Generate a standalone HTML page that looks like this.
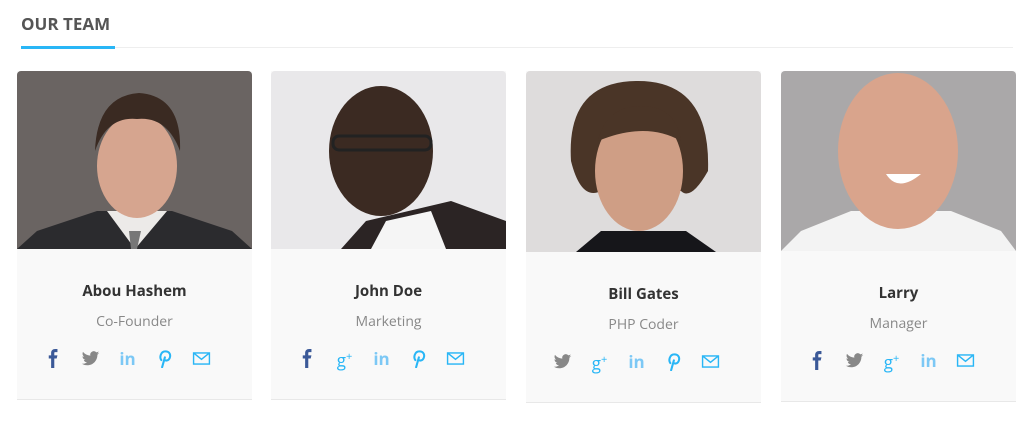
<!DOCTYPE html>
<html><head><meta charset="utf-8"><style>
*{margin:0;padding:0;box-sizing:border-box}
body{width:1029px;height:421px;background:#fff;font-family:"Open Sans","Liberation Sans",sans-serif;position:relative;overflow:hidden}
.title{position:absolute;left:21px;top:12px;font-size:17px;font-weight:bold;color:#555}
.line{position:absolute;left:21px;top:47px;width:992px;height:1px;background:#eee}
.uline{position:absolute;left:21px;top:46px;width:94px;height:3px;background:#29b6f6}
.card{position:absolute;top:71px;width:235px;background:#f9f9f9;border-bottom:1px solid #e8e8e8}
.card svg.ph{display:block;border-radius:4px 4px 0 0}
.name{text-align:center;font-size:15px;font-weight:bold;color:#333;margin-top:32px}
.role{text-align:center;font-size:14px;color:#888;margin-top:11px}
.icons{display:flex;justify-content:center;gap:18px;margin-top:18px;height:40px;padding-right:14px}
.icons svg{width:19px;height:19px;display:block}
.gp{color:#29b6f6;font-size:17px;width:19px;line-height:16px;text-align:center}
.gp sup{font-size:11px}
.li{color:#7cc8f5;font-weight:bold;font-size:17px;width:19px;line-height:19px;text-align:center}
</style></head><body>
<div class="title">OUR TEAM</div>
<div class="line"></div><div class="uline"></div>

<svg width="0" height="0" style="position:absolute">
<defs>
<symbol id="fb" viewBox="0 0 24 24"><path d="M14 4h3V0h-3c-3 0-5 2-5 5v3H6v4h3v12h4V12h3l1-4h-4V5c0-.6.4-1 1-1z" fill="#3b5998"/></symbol>
<symbol id="tw" viewBox="0 0 24 24"><path d="M23 5c-.8.4-1.7.6-2.6.7.9-.6 1.6-1.4 2-2.5-.9.5-1.9.9-2.9 1.1A4.5 4.5 0 0 0 11.8 8.4 12.8 12.8 0 0 1 2.5 3.7a4.5 4.5 0 0 0 1.4 6 4.5 4.5 0 0 1-2-.6v.1a4.5 4.5 0 0 0 3.6 4.4 4.5 4.5 0 0 1-2 .1 4.5 4.5 0 0 0 4.2 3.1A9 9 0 0 1 1 18.6 12.8 12.8 0 0 0 7.9 20.6c8.3 0 12.8-6.9 12.8-12.8v-.6c.9-.6 1.6-1.4 2.3-2.2z" fill="#888"/></symbol>
<symbol id="pi" viewBox="0 0 24 24"><path d="M9 23l3.5-12.5M8 14C5.5 11 7 3 13 3s7 5 5.5 8.5S14 15 12 14" fill="none" stroke="#29b6f6" stroke-width="2.6" stroke-linecap="round"/></symbol>
<symbol id="ml" viewBox="0 0 24 24"><rect x="2" y="5" width="20" height="14" fill="none" stroke="#29b6f6" stroke-width="1.8"/><path d="M2 5l10 8 10-8" fill="none" stroke="#29b6f6" stroke-width="1.8"/></symbol>
</defs></svg>

<div class="card" style="left:17px;height:329px">
<svg class="ph" width="235" height="178"><rect width="235" height="178" fill="#6a6462"/>
<path d="M0 178 L20 160 L80 140 L155 140 L215 160 L235 178Z" fill="#2b2b2e"/>
<path d="M90 140 L118 178 L150 140Z" fill="#eceae8"/><path d="M112 160 L124 160 L120 178 L114 178Z" fill="#777"/>
<ellipse cx="120" cy="95" rx="40" ry="52" fill="#d6a58f"/><path d="M78 80 Q80 25 122 22 Q165 25 163 80 Q150 45 120 48 Q90 45 78 80Z" fill="#3a2a22"/></svg>
<div class="name">Abou Hashem</div><div class="role">Co-Founder</div>
<div class="icons"><svg><use href="#fb"/></svg><svg><use href="#tw"/></svg><div class="li">in</div><svg><use href="#pi"/></svg><svg><use href="#ml"/></svg></div>
</div>

<div class="card" style="left:271px;height:329px">
<svg class="ph" width="235" height="178"><rect width="235" height="178" fill="#e9e8ea"/>
<path d="M70 178 L95 150 L180 130 L235 150 L235 178Z" fill="#2b2424"/><path d="M100 178 L115 150 L160 140 L175 178Z" fill="#f5f5f5"/>
<ellipse cx="110" cy="80" rx="52" ry="65" fill="#3b2a22"/><rect x="62" y="65" width="98" height="14" rx="6" fill="none" stroke="#222" stroke-width="3"/></svg>
<div class="name">John Doe</div><div class="role">Marketing</div>
<div class="icons"><svg><use href="#fb"/></svg><div class="gp">g<sup>+</sup></div><div class="li">in</div><svg><use href="#pi"/></svg><svg><use href="#ml"/></svg></div>
</div>

<div class="card" style="left:526px;height:332px">
<svg class="ph" width="235" height="181"><rect width="235" height="181" fill="#dedcdc"/>
<path d="M50 181 L75 160 L160 160 L190 181Z" fill="#16161a"/>
<path d="M45 90 Q40 10 112 10 Q185 10 182 100 Q165 130 155 120 L75 120 Q55 130 45 90Z" fill="#4a3527"/>
<ellipse cx="113" cy="100" rx="44" ry="60" fill="#cf9e85"/><path d="M72 70 Q80 35 115 35 Q150 35 155 70 Q120 50 72 70Z" fill="#4a3527"/></svg>
<div class="name">Bill Gates</div><div class="role">PHP Coder</div>
<div class="icons"><svg><use href="#tw"/></svg><div class="gp">g<sup>+</sup></div><div class="li">in</div><svg><use href="#pi"/></svg><svg><use href="#ml"/></svg></div>
</div>

<div class="card" style="left:781px;height:331px">
<svg class="ph" width="235" height="180"><rect width="235" height="180" fill="#aaa8a9"/>
<path d="M0 180 L20 160 L70 140 L170 140 L220 160 L235 180Z" fill="#f3f3f3"/>
<ellipse cx="117" cy="80" rx="60" ry="78" fill="#d9a48c"/><path d="M105 103 Q117 122 140 103Z" fill="#fff"/></svg>
<div class="name">Larry</div><div class="role">Manager</div>
<div class="icons"><svg><use href="#fb"/></svg><svg><use href="#tw"/></svg><div class="gp">g<sup>+</sup></div><div class="li">in</div><svg><use href="#ml"/></svg></div>
</div>
</body></html>
